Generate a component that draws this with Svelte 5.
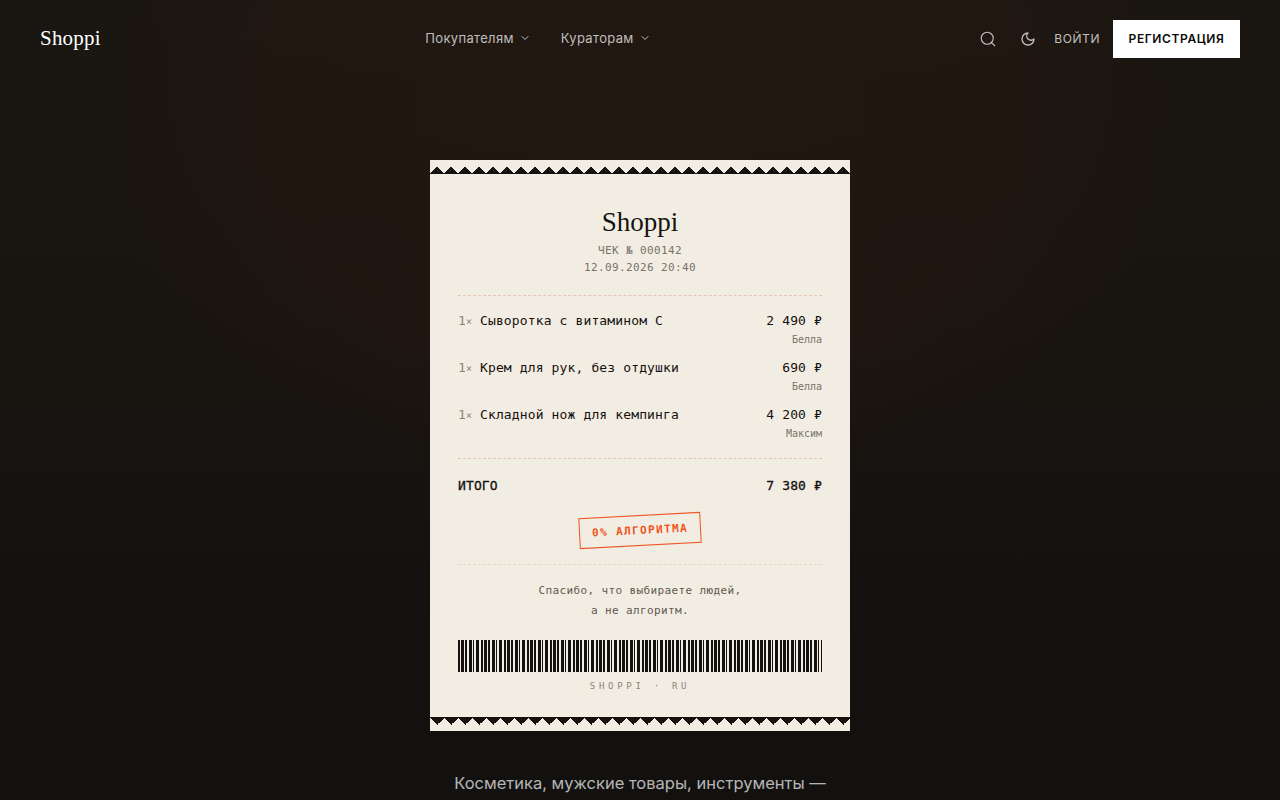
<script lang="ts">
	interface Item {
		qty: number;
		name: string;
		price: string;
		curator: string;
	}

	const items: Item[] = [
		{ qty: 1, name: 'Сыворотка с витамином C', price: '2 490 ₽', curator: 'Белла' },
		{ qty: 1, name: 'Крем для рук, без отдушки', price: '690 ₽', curator: 'Белла' },
		{ qty: 1, name: 'Складной нож для кемпинга', price: '4 200 ₽', curator: 'Максим' }
	];

	// bar, gap, bar, gap... repeats until the 364px strip is full
	const pattern = [2, 1, 3, 1, 2, 2, 3, 1, 1, 2, 3, 2];
	const bars: { width: number; gap: number }[] = [];
	let used = 0;
	for (let i = 0; used < 364; i += 2) {
		const width = pattern[i % pattern.length];
		const gap = pattern[(i + 1) % pattern.length];
		bars.push({ width, gap });
		used += width + gap;
	}
</script>

<div class="page">
	<header class="topbar">
		<a class="logo" href="/">Shoppi</a>
		<nav class="nav">
			<button class="nav-link">
				Покупателям
				<svg width="12" height="12" viewBox="0 0 24 24" fill="none" stroke="currentColor" stroke-width="2" stroke-linecap="round" stroke-linejoin="round"><path d="m6 9 6 6 6-6" /></svg>
			</button>
			<button class="nav-link">
				Кураторам
				<svg width="12" height="12" viewBox="0 0 24 24" fill="none" stroke="currentColor" stroke-width="2" stroke-linecap="round" stroke-linejoin="round"><path d="m6 9 6 6 6-6" /></svg>
			</button>
		</nav>
		<div class="actions">
			<button class="icon-btn" aria-label="Поиск">
				<svg width="18" height="18" viewBox="0 0 24 24" fill="none" stroke="currentColor" stroke-width="1.5" stroke-linecap="round" stroke-linejoin="round"><circle cx="11" cy="11" r="8" /><path d="m21 21-4.3-4.3" /></svg>
			</button>
			<button class="icon-btn" aria-label="Тема">
				<svg width="16" height="16" viewBox="0 0 24 24" fill="none" stroke="currentColor" stroke-width="2" stroke-linecap="round" stroke-linejoin="round"><path d="M12 3a6 6 0 0 0 9 9 9 9 0 1 1-9-9Z" /></svg>
			</button>
			<button class="login">Войти</button>
			<button class="signup">Регистрация</button>
		</div>
	</header>

	<main class="hero">
		<article class="receipt">
			<div class="zigzag top"></div>
			<div class="receipt-body">
				<div class="receipt-head">
					<div class="receipt-logo">Shoppi</div>
					<div class="meta">ЧЕК № 000142</div>
					<div class="meta">12.09.2026 20:40</div>
				</div>

				<div class="lines">
					{#each items as item}
						<div class="line">
							<div class="line-name"><span class="qty">{item.qty}<small>×</small></span>{item.name}</div>
							<div class="line-right">
								<div class="price">{item.price}</div>
								<div class="curator">{item.curator}</div>
							</div>
						</div>
					{/each}
				</div>

				<div class="total">
					<span>ИТОГО</span>
					<span>7 380 ₽</span>
				</div>

				<div class="stamp-row">
					<span class="stamp">0% АЛГОРИТМА</span>
				</div>

				<p class="thanks">Спасибо, что выбираете людей,<br />а не алгоритм.</p>

				<div class="barcode">
					{#each bars as bar}
						<i style="width: {bar.width}px; margin-right: {bar.gap}px"></i>
					{/each}
				</div>
				<div class="barcode-label">SHOPPI · RU</div>
			</div>
			<div class="zigzag bottom"></div>
		</article>

		<p class="tagline">Косметика, мужские товары, инструменты —</p>
	</main>
</div>

<style>
	:global(body) {
		background: #121110;
	}

	.page {
		height: 800px;
		overflow: hidden;
		color: #fff;
		font-family: Inter, 'Liberation Sans', sans-serif;
		background:
			radial-gradient(ellipse 540px 400px at 50% 110px, rgba(48, 26, 18, 0.36) 0%, rgba(48, 26, 18, 0.28) 70%, transparent 100%),
			linear-gradient(180deg, #1a1611 0%, #181410 45%, #121110 85%);
	}

	button {
		background: none;
		border: none;
		padding: 0;
		font: inherit;
		color: inherit;
		cursor: pointer;
	}

	.topbar {
		display: flex;
		justify-content: space-between;
		align-items: center;
		height: 78px;
		padding: 0 40px 1px;
		box-sizing: border-box;
	}

	.logo {
		font-family: 'Liberation Serif', serif;
		font-size: 21px;
		color: #fff;
		text-decoration: none;
		letter-spacing: 0.01em;
	}

	.nav {
		display: flex;
		gap: 30px;
		margin-left: 7px;
		padding-bottom: 2px;
	}

	.nav-link {
		display: flex;
		align-items: center;
		gap: 5px;
		font-size: 13px;
		letter-spacing: 0.025em;
		color: rgba(255, 255, 255, 0.72);
	}

	.actions {
		display: flex;
		align-items: center;
		justify-content: flex-end;
	}

	.icon-btn {
		display: flex;
		align-items: center;
		justify-content: center;
		width: 40px;
		height: 38px;
		color: rgba(255, 255, 255, 0.72);
	}

	.login {
		margin-left: 6px;
		font-size: 12px;
		letter-spacing: 0.05em;
		text-transform: uppercase;
		color: rgba(255, 255, 255, 0.72);
	}

	.signup {
		margin-left: 13px;
		padding: 0 15.5px;
		height: 38px;
		background: #fff;
		color: #0b0b0b;
		font-size: 12px;
		font-weight: 600;
		letter-spacing: 0.05em;
		text-transform: uppercase;
	}

	.hero {
		display: flex;
		flex-direction: column;
		align-items: center;
		padding-top: 82px;
	}

	.receipt {
		width: 420px;
		background: #f2ede3;
		color: #14110e;
		font-family: 'DejaVu Sans Mono', 'Liberation Mono', monospace;
	}

	.zigzag {
		height: 13px;
		background-repeat: repeat-x;
		background-size: 14px 14px;
	}

	.zigzag.top {
		border-bottom: 1px solid #14110e;
		background-image:
			linear-gradient(45deg, #14110e 25%, transparent 25%),
			linear-gradient(-45deg, #14110e 25%, transparent 25%);
		background-position: 7px -1px;
	}

	.zigzag.bottom {
		border-top: 1px solid #14110e;
		background-image:
			linear-gradient(135deg, #14110e 25%, transparent 25%),
			linear-gradient(-135deg, #14110e 25%, transparent 25%);
		background-position: 7px 0;
	}

	.receipt-body {
		padding: 30px 28px 25px;
	}

	.receipt-head {
		text-align: center;
		padding-bottom: 19px;
		border-bottom: 1px dashed #e8c4b4;
	}

	.receipt-logo {
		font-family: 'Liberation Serif', serif;
		font-size: 27px;
		line-height: 36px;
		margin-bottom: 2px;
	}

	.meta {
		font-size: 11px;
		line-height: 17px;
		letter-spacing: 0.38px;
		color: #77736a;
	}

	.lines {
		display: flex;
		flex-direction: column;
		gap: 10px;
		padding: 16px 0 15px;
		border-bottom: 1px dashed #e8c4b4;
	}

	.line {
		display: flex;
		justify-content: space-between;
		align-items: flex-start;
		font-size: 13px;
		line-height: 18px;
		letter-spacing: 0.13px;
	}

	.line-name {
		display: flex;
		gap: 6px;
	}

	.qty {
		min-width: 16px;
		color: #8a8478;
	}

	.qty small {
		font-size: 10px;
	}

	.line-right {
		text-align: right;
	}

	.curator {
		margin-top: 1px;
		font-size: 10px;
		line-height: 18px;
		letter-spacing: 0;
		color: #77736a;
	}

	.total {
		display: flex;
		justify-content: space-between;
		padding-top: 17px;
		font-size: 13px;
		line-height: 20px;
		letter-spacing: 0.13px;
		-webkit-text-stroke: 0.3px #14110e;
	}

	.stamp-row {
		display: flex;
		justify-content: center;
		padding: 19px 0 18px;
		border-bottom: 1px dashed #e0dacc;
	}

	.stamp {
		padding: 7px 12px;
		border: 1px solid #ee5522;
		color: #ee5522;
		font-size: 11px;
		line-height: 15px;
		font-weight: 700;
		letter-spacing: 1.38px;
		transform: rotate(-3deg);
	}

	.thanks {
		margin: 16px 0 19px;
		text-align: center;
		font-size: 11px;
		line-height: 20px;
		letter-spacing: 0.38px;
		color: #5f594e;
	}

	.barcode {
		display: flex;
		height: 32px;
		width: 364px;
		overflow: hidden;
	}

	.barcode i {
		flex: none;
		background: #14110e;
	}

	.barcode-label {
		margin-top: 8px;
		text-align: center;
		font-size: 9px;
		line-height: 12px;
		letter-spacing: 3.7px;
		color: #8a8478;
	}

	.tagline {
		margin: 37px 0 0;
		text-align: center;
		font-size: 16.5px;
		line-height: 30px;
		color: rgba(255, 255, 255, 0.7);
	}
</style>
